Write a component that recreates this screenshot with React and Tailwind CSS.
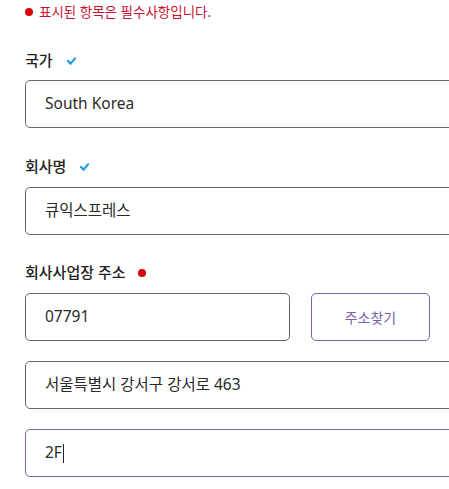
const FONT = { fontFamily: '"Noto Sans", "Noto Sans CJK KR", sans-serif' }

function Check() {
  return (
    <svg width="9" height="8" viewBox="0 0 9 8" className="ml-[14px] mt-[2px]">
      <path d="M1 4 L3.6 6.6 L8 1.4" fill="none" stroke="#1d9bd8" strokeWidth="2.2" strokeLinecap="round" strokeLinejoin="round" />
    </svg>
  )
}

function Dot() {
  return <span className="inline-block w-[8px] h-[8px] rounded-full bg-[#d9000d]" />
}

function Label({ children, mark }) {
  return (
    <div className="flex items-center h-[20px] text-[15px] font-medium text-[#222]">
      <span>{children}</span>
      {mark}
    </div>
  )
}

function Field({ value, purple, caret }) {
  return (
    <div
      className={
        "w-[470px] h-[48px] flex items-center pl-[19px] rounded-[5px] border text-[15.5px] text-[#2a2a2a] " +
        (purple ? "border-[#7d5fae]" : "border-[#666]")
      }
    >
      {value}
      {caret && <span className="inline-block w-px h-[19px] bg-[#222] ml-px" />}
    </div>
  )
}

function App() {
  return (
    <div className="w-[449px] h-[489px] overflow-hidden bg-white pl-[25px]" style={FONT}>
      <div className="flex items-center gap-[6px] h-[24px] text-[13.5px] text-[#c8102e]">
        <Dot />
        <span>표시된 항목은 필수사항입니다.</span>
      </div>

      <div className="mt-[26px]">
        <Label mark={<Check />}>국가</Label>
        <div className="mt-[10px]">
          <Field value="South Korea" />
        </div>
      </div>

      <div className="mt-[28px]">
        <Label mark={<Check />}>회사명</Label>
        <div className="mt-[11px]">
          <Field value="큐익스프레스" />
        </div>
      </div>

      <div className="mt-[27px]">
        <Label mark={<span className="ml-[12px] mt-[1px] flex"><Dot /></span>}>회사사업장 주소</Label>
        <div className="mt-[11px] flex gap-[21px]">
          <div className="w-[265px] h-[48px] flex items-center pl-[19px] rounded-[5px] border border-[#666] text-[15.5px] text-[#2a2a2a]">
            07791
          </div>
          <button className="w-[119px] h-[48px] rounded-[5px] border border-[#7d5fae] text-[14px] text-[#7a62a8] bg-white">
            주소찾기
          </button>
        </div>
        <div className="mt-[20px]">
          <Field value="서울특별시 강서구 강서로 463" />
        </div>
        <div className="mt-[20px]">
          <Field value="2F" purple caret />
        </div>
      </div>
    </div>
  )
}

export default App
